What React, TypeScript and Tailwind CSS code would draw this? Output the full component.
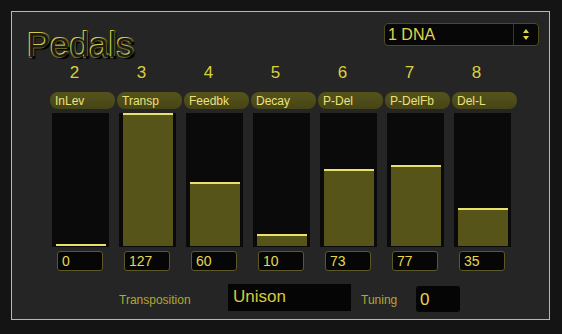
import React from 'react';

// pedal params
const pedals = [
  { num: 2, name: 'InLev', val: 0 },
  { num: 3, name: 'Transp', val: 127 },
  { num: 4, name: 'Feedbk', val: 60 },
  { num: 5, name: 'Decay', val: 10 },
  { num: 6, name: 'P-Del', val: 73 },
  { num: 7, name: 'P-DelFb', val: 77 },
  { num: 8, name: 'Del-L', val: 35 },
];

const Column = ({ num, name, val }: { num: number; name: string; val: number }) => (
  <div className="flex w-[65px] flex-col">
    <div className="w-[49px] text-center text-[17px] leading-[20px] text-[#dccf3e]">{num}</div>
    <div className="mt-[9px] flex h-[17px] items-center rounded-[8px] bg-[linear-gradient(#55531c,#474516)] pl-[5px] text-[12px] leading-none text-[#ece27a]">
      {name}
    </div>
    <div className="ml-[2px] mt-[4px] flex h-[134px] w-[57px] flex-col justify-end bg-[#0a0a0a] pb-[1px] pl-[4px] pr-[3px]">
      <div
        className="border-t-2 border-[#e8e26c] bg-[#57541a]"
        style={{ height: Math.round(2 + (val / 127) * 131) }}
      />
    </div>
    <div className="ml-[7px] mt-[4px] flex h-[20px] w-[46px] items-center rounded-[3px] border border-[#5e5828] bg-[#060606] pl-[4px] text-[14px] leading-none text-[#e4d850]">
      {val}
    </div>
  </div>
);

export default function App() {
  return (
    <div className="h-[334px] w-[562px] bg-[#141414] pl-[11px] pt-[11px] font-['Liberation_Sans',Arial,sans-serif]">
      <div className="h-[309px] w-[539px] border border-[#cbc24c] bg-[#252525]">
        <div className="flex h-[50px] justify-between pl-[15px] pr-[10px]">
          <div className="mt-[15px] text-[35px] leading-[35px] text-[#1c1c16] [text-shadow:-1px_-1px_0_#d2ca4a,1px_-1px_0_#6a6626,-1px_1px_0_#6a6626,1px_1px_0_#000,2px_2px_1px_#000]">
            Pedals
          </div>
          <div className="mt-[11px] flex h-[23px] w-[155px] items-center rounded-[4px] border border-[#4e4a22] bg-[#070707]">
            <div className="flex-1 pl-[3px] text-[16px] leading-none text-[#e0d44a]">1 DNA</div>
            <div className="flex h-full w-[25px] flex-col items-center justify-center gap-[3px] border-l border-[#3a381c]">
              <svg width="6" height="4" viewBox="0 0 6 4">
                <path d="M0 4 L3 0 L6 4 Z" fill="#e0d44a" />
              </svg>
              <svg width="6" height="4" viewBox="0 0 6 4">
                <path d="M0 0 L3 4 L6 0 Z" fill="#e0d44a" />
              </svg>
            </div>
          </div>
        </div>
        <div className="ml-[38px] mt-[1px] flex gap-[2px]">
          {pedals.map((p) => (
            <Column key={p.num} {...p} />
          ))}
        </div>
        <div className="mt-[13px] flex items-start pl-[107px]">
          <div className="mt-[10px] w-[109px] text-[12px] leading-none text-[#b4a632]">Transposition</div>
          <div className="flex h-[27px] w-[123px] items-center bg-[#050505] pb-[2px] pl-[5px] text-[17px] leading-none text-[#d8ca3a]">
            Unison
          </div>
          <div className="ml-[10px] mt-[10px] w-[55px] text-[12px] leading-none text-[#b4a632]">Tuning</div>
          <div className="mt-[2px] flex h-[26px] w-[44px] items-center rounded-[3px] bg-[#050505] pl-[4px] text-[17px] leading-none text-[#e4d84a]">
            0
          </div>
        </div>
      </div>
    </div>
  );
}
